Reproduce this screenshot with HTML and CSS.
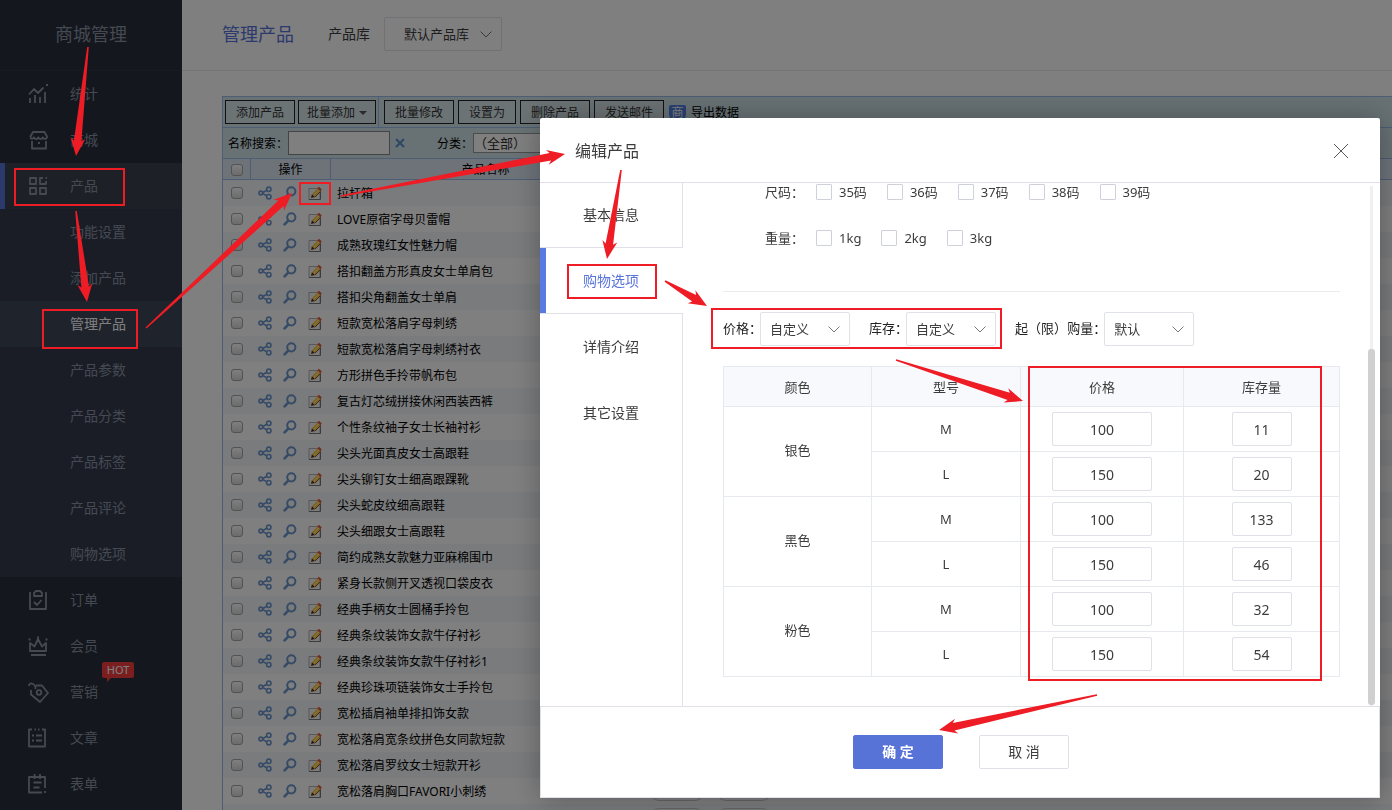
FILE: index.html
```html
<!DOCTYPE html>
<html lang="zh-CN">
<head>
<meta charset="utf-8">
<title>商城管理</title>
<link rel="stylesheet" href="styles.css">
</head>
<body>
<svg class="sprite" aria-hidden="true">
  <symbol id="i-chevron" viewBox="0 0 12 7"><path d="M.5.5 6 6 11.5.5" fill="none" stroke="currentColor"/></symbol>
  <symbol id="i-share" viewBox="0 0 14 14"><g fill="none" stroke="#6c96cc" stroke-width="1.6"><circle cx="2.800" cy="7" r="1.900"/><circle cx="10.800" cy="3.300" r="2.200"/><circle cx="10.800" cy="10.700" r="2.200"/><path d="M4.800 6.500 8.800 4.200M4.800 7.600l4 2.200"/></g></symbol>
  <symbol id="i-find" viewBox="0 0 14 14"><circle cx="8.3" cy="5.3" r="4.1" fill="none" stroke="#6c96cc" stroke-width="2"/><path d="M5.2 8.6 1.6 12.4" stroke="#6c96cc" stroke-width="2.6" stroke-linecap="round"/></symbol>
  <symbol id="i-edit" viewBox="0 0 14 14"><path d="M1 2.500h11v11H1z" fill="#f6f6f6" stroke="#b0b0b0"/><path d="M12.500 6v7.500H1" fill="none" stroke="#777"/><path d="M4 8.200 9.500 2.400 12.400 5.200 6.700 11z" fill="#ffc93e"/><path d="M5.500 9.700 11 4" stroke="#fff0a0"/><path d="M6.900 11.200 12.600 5.400" stroke="#8a4f1c"/><path d="M9.400 2.300 10.900.7 13.800 3.500 12.400 5.200z" fill="#e4563e"/><path d="M3 12 3.900 8.200 6.800 11z" fill="#4a3020"/></symbol>
</svg>

<div class="app">
  <aside class="sidebar">
    <h1 class="brand">商城管理</h1>
    <nav class="menu">
      <a class="item" href="#"><svg class="icon" viewBox="0 0 20 20"><path d="M1 10.500 6 5l4 4 5.500-5.500M2 14v5M7 11v8M12 13v6M17 8v11M18 1h2"/></svg>统计</a>
      <a class="item" href="#"><svg class="icon" viewBox="0 0 20 20"><path d="M5 2h11.500L19 6.500c0 3-3.500 3-4.200.8-.9 2.300-3.800 2.300-4.500 0-.9 2.300-3.800 2.300-4.500 0C5 9.500 2.500 9.500 2.500 6.500zM4 11v7.500h14V11M10 13h2"/></svg>商城</a>
      <a class="item current" href="#"><svg class="icon" viewBox="0 0 20 20"><path d="M2 2h6v6H2zM2 12h6v6H2zM12 12h6v6h-6zM15 2h-3v6h6V5M17.500 2H19"/></svg>产品</a>
      <div class="submenu">
        <a class="sub" href="#">功能设置</a>
        <a class="sub" href="#">添加产品</a>
        <a class="sub active" href="#">管理产品</a>
        <a class="sub" href="#">产品参数</a>
        <a class="sub" href="#">产品分类</a>
        <a class="sub" href="#">产品标签</a>
        <a class="sub" href="#">产品评论</a>
        <a class="sub" href="#">购物选项</a>
      </div>
      <a class="item" href="#"><svg class="icon" viewBox="0 0 20 20"><path d="M3 3H2v16h16V3h-1M8 1h4l2 2v3H6V3zM6 12l3 3 4.500-5"/></svg>订单</a>
      <a class="item" href="#"><svg class="icon" viewBox="0 0 20 20"><path d="M2 7v8h16V7l-4 3.500L10 3 6.500 10.500zM3 19h15M.5 3.500h2M17.500 3.500h2M9 1.500h2"/></svg>会员</a>
      <a class="item" href="#"><svg class="icon" viewBox="0 0 20 20"><path d="M3 8v4.500l9 7.500 8-9-6-7.500H8M7.500 7C8 1.500 1-.5 1 4"/><circle cx="11" cy="10.500" r="2.300"/></svg>营销<span class="hot">HOT</span></a>
      <a class="item" href="#"><svg class="icon" viewBox="0 0 20 20"><path d="M4 1.500H1v17h16v-17h-3M6.500 1.500h1.500M10 1.500h1.500M4 7.500h2M4 12.500h2M8 7.500h6M8 12.500h6"/></svg>文章</a>
      <a class="item" href="#"><svg class="icon" viewBox="0 0 20 20"><path d="M14 18.500H1V3h16v11M6.500 0v5M12 0v5M5.500 8.500h8M5.500 13.500h6M17 17v2"/></svg>表单</a>
    </nav>
  </aside>

  <main class="main">
    <header class="topbar">
      <h2 class="page-title">管理产品</h2>
      <label class="lib-label" for="lib">产品库</label>
      <span class="pick pick-lib"><select id="lib"><option>默认产品库</option></select><svg class="chev"><use href="#i-chevron"/></svg></span>
    </header>
    <section class="grid">
      <div class="toolbar">
        <button class="tool">添加产品</button>
        <button class="tool">批量添加<i class="caret"></i></button>
        <span class="split"></span>
        <button class="tool">批量修改</button>
        <button class="tool gap">设置为</button>
        <button class="tool gap">删除产品</button>
        <button class="tool gap">发送邮件</button>
        <button class="export"><span class="shield">商</span>导出数据</button>
      </div>
      <div class="filters">
        <label for="q">名称搜索<span class="mid">：</span></label>
        <input id="q" class="search" type="text">
        <button class="clear" aria-label="清除"><svg viewBox="0 0 10 10"><path d="M1 1l8 8M9 1 1 9"/></svg></button>
        <label for="cat">分类<span class="mid">：</span></label>
        <select id="cat" class="cat"><option>（全部）</option></select>
      </div>
      <table class="list">
        <colgroup><col class="c-check"><col class="c-ops"><col class="c-name"><col></colgroup>
        <thead><tr><th><input class="tick" type="checkbox" aria-label="全选"></th><th>操作</th><th>产品名称</th><th></th></tr></thead>
        <tbody id="rows"></tbody>
      </table>
    </section>
  </main>
</div>

<div class="overlay">
  <div class="dialog" role="dialog" aria-labelledby="dlg-title">
    <header class="dlg-head">
      <h3 id="dlg-title">编辑产品</h3>
      <button class="close" aria-label="关闭"><svg viewBox="0 0 16 16"><path d="M1 1l14 14M15 1 1 15"/></svg></button>
    </header>
    <div class="dlg-body">
      <nav class="tabs">
        <button class="tab">基本信息</button>
        <button class="tab on">购物选项</button>
        <button class="tab">详情介绍</button>
        <button class="tab">其它设置</button>
      </nav>
      <div class="pane">
        <div class="opts"><span class="opts-name">尺码<span class="mid">：</span></span>
          <label class="opt"><input type="checkbox">35码</label>
          <label class="opt"><input type="checkbox">36码</label>
          <label class="opt"><input type="checkbox">37码</label>
          <label class="opt"><input type="checkbox">38码</label>
          <label class="opt"><input type="checkbox">39码</label>
        </div>
        <div class="opts"><span class="opts-name">重量<span class="mid">：</span></span>
          <label class="opt"><input type="checkbox">1kg</label>
          <label class="opt"><input type="checkbox">2kg</label>
          <label class="opt"><input type="checkbox">3kg</label>
        </div>
        <div class="modes">
          <div class="mode"><label for="m1">价格<span class="mid">：</span></label><span class="pick"><select id="m1"><option>自定义</option></select><svg class="chev"><use href="#i-chevron"/></svg></span></div>
          <div class="mode"><label for="m2">库存<span class="mid">：</span></label><span class="pick"><select id="m2"><option>自定义</option></select><svg class="chev"><use href="#i-chevron"/></svg></span></div>
          <div class="mode"><label for="m3">起<span class="mid">（</span>限<span class="mid">）</span>购量<span class="mid">：</span></label><span class="pick"><select id="m3"><option>默认</option></select><svg class="chev"><use href="#i-chevron"/></svg></span></div>
        </div>
        <table class="sku">
          <colgroup><col class="s-color"><col class="s-model"><col class="s-price"><col class="s-stock"></colgroup>
          <thead><tr><th>颜色</th><th>型号</th><th>价格</th><th>库存量</th></tr></thead>
          <tbody>
            <tr><td rowspan="2">银色</td><td>M</td><td><input class="price" value="100" aria-label="价格"></td><td><input class="stock" value="11" aria-label="库存量"></td></tr>
            <tr><td>L</td><td><input class="price" value="150" aria-label="价格"></td><td><input class="stock" value="20" aria-label="库存量"></td></tr>
            <tr><td rowspan="2">黑色</td><td>M</td><td><input class="price" value="100" aria-label="价格"></td><td><input class="stock" value="133" aria-label="库存量"></td></tr>
            <tr><td>L</td><td><input class="price" value="150" aria-label="价格"></td><td><input class="stock" value="46" aria-label="库存量"></td></tr>
            <tr><td rowspan="2">粉色</td><td>M</td><td><input class="price" value="100" aria-label="价格"></td><td><input class="stock" value="32" aria-label="库存量"></td></tr>
            <tr><td>L</td><td><input class="price" value="150" aria-label="价格"></td><td><input class="stock" value="54" aria-label="库存量"></td></tr>
          </tbody>
        </table>
        <div class="track"><div class="thumb"></div></div>
      </div>
    </div>
    <footer class="dlg-foot">
      <button class="btn primary">确 定</button>
      <button class="btn">取 消</button>
    </footer>
  </div>
</div>

<svg class="marks" id="marks" width="1392" height="810" viewBox="0 0 1392 810" aria-hidden="true"></svg>
<script src="app.js"></script>
</body>
</html>
```
FILE: styles.css
```css
* { box-sizing: border-box; }
html, body { height: 100%; }
body {
  margin: 0;
  overflow: hidden;
  background: #fff;
  color: #3c3c3c;
  font: 13px/18px "Noto Sans", "Noto Sans CJK SC", sans-serif;
}
button, input, select { font: inherit; color: inherit; margin: 0; }
button { background: none; border: 0; padding: 0; }
h1, h2, h3 { margin: 0; font-weight: 400; }
a { color: inherit; text-decoration: none; }
.sprite { display: none; }
/* punctuation centred in its em box */
.mid { font-family: "Noto Sans CJK TC", sans-serif; line-height: 1; }

.app { display: flex; height: 100%; }

/* sidebar */
.sidebar { width: 182px; flex: none; background: #282e3b; color: #8a93a3; font-size: 14px; overflow: hidden; }
.brand { height: 71px; line-height: 68px; text-align: center; font-size: 18px; border-bottom: 1px solid #2f3440; }
.item, .sub { display: flex; align-items: center; height: 46px; padding-left: 70px; position: relative; }
.item { padding-left: 28px; gap: 22px; }
.icon { width: 20px; height: 20px; fill: none; stroke: #8a93a3; stroke-width: 1.8; stroke-linejoin: round; overflow: visible; }
.item.current { background: #3a414d; padding-left: 23px; border-left: 5px solid #5873db; }
.submenu { background: #343b4d; }
.sub.active { background: #3e4658; color: #fff; }
.hot { position: absolute; left: 102px; top: -7px; width: 32px; height: 16px; border-radius: 2px; background: #f63c3e; color: #fff; font-size: 11px; line-height: 16px; text-align: center; }
.hot::after { content: ""; position: absolute; left: 5px; top: 15px; border-top: 5px solid #f63c3e; border-right: 5px solid transparent; }

/* page header */
.main { flex: 1; min-width: 0; overflow: hidden; }
.topbar { display: flex; align-items: center; height: 71px; padding: 0 0 2px 40px; border-bottom: 1px solid #ebebeb; }
.page-title { font-size: 18px; color: #5873db; margin-right: 34px; }
.lib-label { font-size: 14px; margin-right: 14px; }
.pick { display: inline-grid; align-items: center; width: 90px; height: 34px; }
.pick > * { grid-area: 1 / 1; }
.pick select { appearance: none; width: 100%; height: 34px; padding: 0 9px; background: #fff; border: 1px solid #dfe2e8; border-radius: 2px; }
.chev { width: 12px; height: 7px; justify-self: end; margin-right: 10px; color: #777; pointer-events: none; }
.pick-lib { width: 118px; }
.pick-lib select { padding-left: 19px; }

/* product grid */
.grid { margin: 25px 0 0 40px; border: 1px solid #99bbe8; border-right: 0; font-size: 12px; color: #000; }
.toolbar { display: flex; align-items: center; height: 31px; padding-left: 2px; background: #d0e3e9; border-bottom: 1px solid #99bbe8; }
.tool { height: 24px; padding: 2px 10px 0; border: 1px solid #222; margin-right: 3px; background: #d8e6ea; color: #333; line-height: 20px; white-space: nowrap; width: 70px; }
.tool:nth-child(2) { width: 78px; padding: 2px 7px 0; margin-right: 2px; }
.tool:nth-child(5) { width: 58px; }
.tool + .gap { margin-left: 1px; }
.caret { display: inline-block; margin-left: 4px; border: 4px solid transparent; border-top-color: #555; border-bottom: 0; vertical-align: 2px; }
.split { width: 1px; height: 30px; margin-right: 5px; background: #99bbe8; }
.export { display: flex; align-items: center; gap: 5px; margin-left: 2px; padding-top: 2px; }
.shield { width: 17px; height: 17px; line-height: 16px; background: #5282e8; color: #fff; border-radius: 2px 2px 8px 8px; }
.filters { display: flex; align-items: center; height: 31px; padding-left: 5px; background: #d0e3e9; border-bottom: 1px solid #99bbe8; }
.filters label { padding-top: 2px; }
.search { width: 102px; height: 24px; border: 1px solid #888; background: #fff; }
.clear { display: flex; margin: 0 32px 0 5px; }
.clear svg { width: 10px; height: 10px; stroke: #5d8fc9; stroke-width: 2; }
.cat { appearance: none; width: 110px; height: 20px; padding: 0; border: 1px solid #999; background: #fff; color: #333; font-family: "Noto Sans CJK TC", sans-serif; font-size: 13px; line-height: 16px; }
.list { width: 100%; table-layout: fixed; border-collapse: separate; border-spacing: 0; }
.list th, .list td { padding: 0; font-weight: 400; }
.list th { height: 21px; background: #dde7f5; border-bottom: 1px solid #99bbe8; line-height: 16px; padding-top: 1px; }
.list th:nth-child(-n+2) { border-right: 1px solid #99bbe8; }
.list td { height: 26px; line-height: 18px; white-space: nowrap; }
.list tbody tr:nth-child(odd) { background: #f3f6fa; }
.c-check { width: 28px; }
.c-ops { width: 80px; }
.c-name { width: 309px; }
.tick { appearance: none; display: block; width: 12px; height: 12px; margin: 0 auto; border: 1px solid #a5a5a5; border-radius: 3px; background: linear-gradient(#fff, #d8d8d8); }
.ops { display: flex; gap: 11px; padding-left: 7px; }
.ops svg { display: block; width: 14px; height: 14px; }
.list .name { padding: 2px 0 0 6px; }
.nums { display: flex; gap: 13px; padding-left: 10px; }
.nums input { width: 54px; height: 19px; border: 1px solid #ccc; border-radius: 9px; background: transparent; padding: 0 8px; }

/* dialog */
.overlay { position: fixed; inset: 0; display: flex; justify-content: flex-end; padding: 118px 12px 12px; background: rgba(0, 0, 0, .5); }
.dialog { display: flex; flex-direction: column; width: 840px; background: #fff; border-radius: 2px; box-shadow: 1px 1px 30px rgba(0, 0, 0, .3); }
.dlg-head { display: flex; align-items: center; justify-content: space-between; height: 65px; padding: 2px 31px 0 35px; border-bottom: 1px solid #e0e1e8; }
.dlg-head h3 { font-size: 16px; }
.close { display: flex; }
.close svg { width: 16px; height: 16px; stroke: #555; }
.dlg-body { display: flex; flex: 1; min-height: 0; }
.tabs { display: flex; flex-direction: column; width: 143px; }
.tabs::after { content: ""; flex: 1; border-right: 1px solid #e0e1e8; }
.tab { height: 66px; border-right: 1px solid #e0e1e8; font-size: 14px; }
.tab:first-child { height: 65px; border-bottom: 1px solid #e0e1e8; }
.tab.on { color: #5873db; border-right: 0; border-left: 6px solid #587ae2; padding-right: 7px; height: 65px; }
.tab.on + .tab { height: 67px; border-top: 1px solid #e0e1e8; }
.pane { position: relative; flex: 1; min-width: 0; padding: 0 40px; }
.opts { display: flex; gap: 20px; padding-left: 42px; margin-bottom: 28px; }
.opts-name { width: 51px; margin-right: -20px; }
.opt { display: flex; align-items: center; gap: 7px; }
.opt input { appearance: none; width: 16px; height: 16px; border: 1px solid #cfd1da; border-radius: 1px; background: #fff; }
.modes { display: flex; gap: 19px; margin-top: 44px; padding-top: 20px; border-top: 1px solid #ebebef; color: #222; }
.mode { display: flex; align-items: center; }
.mode label { margin-right: -2px; padding-bottom: 2px; }
.mode select { color: #3c3c3c; }
.sku { width: 100%; margin-top: 20px; table-layout: fixed; border-collapse: collapse; text-align: center; }
.sku th, .sku td { padding: 0; border: 1px solid #e6e9ee; font-weight: 400; }
.sku th { height: 40px; background: #f8f9fc; }
.sku td { height: 45px; }
.sku td[rowspan] { padding-bottom: 3px; }
.s-color { width: 148px; }
.s-model { width: 149px; }
.s-price { width: 163px; }
.sku input { display: block; height: 34px; margin: 0 auto; padding: 0; border: 1px solid #dfe0e8; border-radius: 2px; text-align: center; font-size: 14px; }
.sku .price { width: 100px; }
.sku .stock { width: 60px; }
.track { position: absolute; top: 3px; bottom: 0; right: 7px; width: 3px; background: #f0f0f0; }
.thumb { position: absolute; left: -2px; top: 163px; bottom: 1px; width: 7px; border-radius: 3px; background: #d0d0d0; }
.dlg-foot { display: flex; justify-content: center; gap: 36px; height: 92px; padding: 28px 0 0 2px; border: 1px solid #e0e1e8; }
.btn { width: 90px; height: 34px; border: 1px solid #dfe0e8; border-radius: 2px; font-size: 14px; }
.primary { background: #5873d8; border-color: #5873d8; color: #fff; font-weight: 700; }

/* guide marks drawn above everything */
.marks { position: fixed; left: 0; top: 0; pointer-events: none; }
.marks path { fill: #ee1c24; }
.marks rect { fill: none; stroke: #ee1c24; stroke-width: 2; }
```
FILE: app.js
```js
const products = [
  "拉杆箱", "LOVE原宿字母贝雷帽", "成熟玫瑰红女性魅力帽", "搭扣翻盖方形真皮女士单肩包",
  "搭扣尖角翻盖女士单肩", "短款宽松落肩字母刺绣", "短款宽松落肩字母刺绣衬衣", "方形拼色手拎带帆布包",
  "复古灯芯绒拼接休闲西装西裤", "个性条纹袖子女士长袖衬衫", "尖头光面真皮女士高跟鞋", "尖头铆钉女士细高跟踝靴",
  "尖头蛇皮纹细高跟鞋", "尖头细跟女士高跟鞋", "简约成熟女款魅力亚麻棉围巾", "紧身长款侧开叉透视口袋皮衣",
  "经典手柄女士圆桶手拎包", "经典条纹装饰女款牛仔衬衫", "经典条纹装饰女款牛仔衬衫1", "经典珍珠项链装饰女士手拎包",
  "宽松插肩袖单排扣饰女款", "宽松落肩宽条纹拼色女同款短款", "宽松落肩罗纹女士短款开衫", "宽松落肩胸口FAVORI小刺绣", ""
];
document.getElementById("rows").innerHTML = products.map(name => `
  <tr>
    <td><input class="tick" type="checkbox" aria-label="选择"></td>
    <td><div class="ops"><svg><use href="#i-share"/></svg><svg><use href="#i-find"/></svg><svg><use href="#i-edit"/></svg></div></td>
    <td class="name">${name}</td>
    <td><div class="nums"><input type="text" aria-label="数值"><input type="text" aria-label="数值"></div></td>
  </tr>`).join("");

// Tapered arrow from a thin tail to a barbed head
function arrow([x1, y1, x2, y2]) {
  const len = Math.hypot(x2 - x1, y2 - y1);
  const ux = (x2 - x1) / len, uy = (y2 - y1) / len;
  const at = (back, side) => `${(x2 - ux * back - uy * side).toFixed(1)} ${(y2 - uy * back + ux * side).toFixed(1)}`;
  const pts = [at(len, 0.8), at(15, 3.8), at(18, 7.5), at(0, 0), at(18, -7.5), at(15, -3.8), at(len, -0.8)];
  return `<path d="M${pts.join("L")}Z"/>`;
}
const arrows = [
  [88, 47, 76, 156], [76, 211, 87, 302], [146, 328, 292, 193], [341, 196, 565, 154],
  [621, 170, 607, 259], [665, 281, 707, 306], [896, 360, 1023, 401], [1097, 695, 939, 730]
];
const boxes = [
  [15, 169, 109, 36], [43, 310, 94, 38], [300, 183, 30, 21],
  [568, 265, 88, 33], [712, 309, 289, 39], [1029, 367, 292, 313]
];
document.getElementById("marks").innerHTML =
  boxes.map(([x, y, w, h]) => `<rect x="${x}" y="${y}" width="${w}" height="${h}"/>`).join("") +
  arrows.map(arrow).join("");
```
